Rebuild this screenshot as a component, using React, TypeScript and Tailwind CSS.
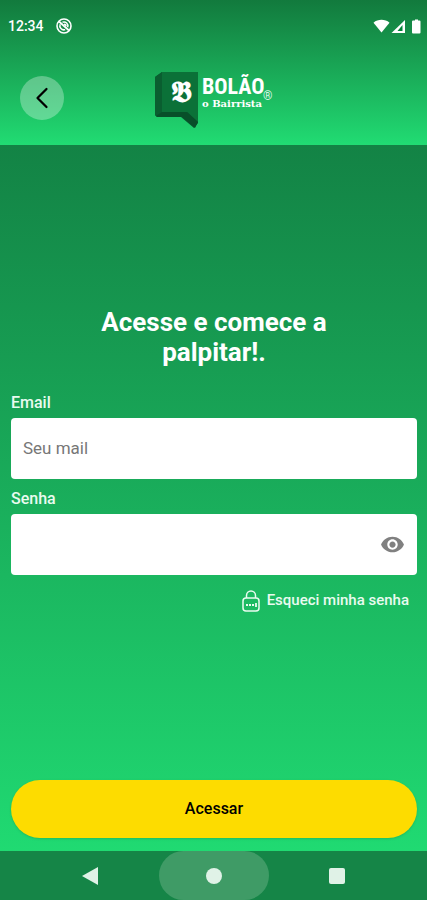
import { useState } from 'react';
import { ChevronLeft } from 'lucide-react';
import { MdVisibility } from 'react-icons/md';

function StatusBar() {
  return (
    <div className="flex h-13 items-center justify-between pr-1.5 pl-2 text-white">
      <div className="flex items-center gap-3">
        <span className="text-sm font-medium">12:34</span>
        <svg viewBox="0 0 16 16" className="size-4" fill="none" stroke="currentColor">
          <circle cx="8" cy="8" r="7" strokeWidth="1.6" />
          <path d="M3 3.5 13 12.5" strokeWidth="1.8" />
          <path d="M6.5 4.2a4 4 0 0 1 5.2 5M4.2 6.2a4 4 0 0 0 5 5.4M8 6.2a2 2 0 0 1 2 2" strokeWidth="1.5" />
        </svg>
      </div>
      <svg viewBox="0 0 48 16" className="h-4 w-12" fill="currentColor">
        <path d="M.5 4.7C5 .9 12 .9 16.500 4.700L8.500 14.500Z" />
        <path d="M32 2v13H18.500Z" />
        <path d="M29.500 7v6h-5Z" className="fill-green-700" />
        <path d="M40 2.500h2V1.500h3v1h1.500q1 0 1 1v11q0 1-1 1H40q-1 0-1-1v-11q0-1 1-1Z" />
      </svg>
    </div>
  );
}

function Logo() {
  return (
    <svg viewBox="0 0 120 60" className="h-15 w-30" role="img" aria-label="Bolão o Bairrista">
      <path d="M1 9 8 4h36v51l-4 5-13-11H3l-2-2Z" fill="#075c30" />
      <path d="M8 4h36v50L33 44H8Z" fill="#0b7138" />
      <path d="M1 9 8 4v40l-6 4-1-1Z" fill="#0a5e30" />
      <path d="m2 48 6-4h25l11 10-3 6-13-11H3Z" fill="#084f29" />
      <text x="27" y="34" textAnchor="middle" fill="#fff" className="font-['DejaVu_Sans','DejaVu_Serif',serif] text-[29px] font-bold">
        𝕭
      </text>
      <text x="48" y="26" fill="#fff" className="font-['Roboto_Condensed','Liberation_Sans_Narrow',sans-serif] text-[22px] font-bold">
        BOLÃO
      </text>
      <text x="48" y="39" fill="#fff" className="font-['DejaVu_Serif',serif] text-[10px] font-bold">
        o Bairrista
      </text>
      <text x="109" y="32" fill="#d7f5e3" className="font-['Roboto',sans-serif] text-[12px]">
        ®
      </text>
    </svg>
  );
}

function LockIcon() {
  return (
    <svg viewBox="0 0 20 24" className="h-6 w-5" fill="none" stroke="currentColor" strokeWidth="1.5">
      <rect x="2" y="9" width="16" height="13" rx="3" />
      <path d="M5.500 9V6.500a4.500 4.500 0 0 1 9 0V9" />
      <path d="M5 16h2m1 0h2m1 0h2m2-2v4" strokeWidth="1.8" />
    </svg>
  );
}

function NavBar() {
  return (
    <nav className="flex h-[49px] items-stretch justify-between bg-[#158547] px-9 text-[#e0f2e7]">
      <button type="button" aria-label="Voltar" className="grid w-27 place-items-center">
        <svg viewBox="0 0 18 18" className="size-[18px]" fill="currentColor">
          <path d="M1 9 17 0v18Z" />
        </svg>
      </button>
      <button type="button" aria-label="Início" className="grid w-[110px] place-items-center rounded-full bg-[#3f9b66]">
        <span className="size-4 rounded-full bg-[#e0f2e7]" />
      </button>
      <button type="button" aria-label="Recentes" className="grid w-27 place-items-center">
        <span className="size-4 rounded-xs bg-[#e0f2e7]" />
      </button>
    </nav>
  );
}

const labelClass = 'text-base leading-5 font-medium text-[#e9fbf0]';
const inputClass =
  'block h-[61px] w-full rounded bg-white px-3 text-[17px] text-gray-800 outline-none placeholder:text-[#777777]';

export default function App() {
  const [showPassword, setShowPassword] = useState(false);

  return (
    <div className="flex min-h-screen flex-col font-['Roboto',sans-serif]">
      <header className="bg-linear-to-b from-[#127a3d] to-[#21dc73] pb-[17px]">
        <StatusBar />
        <div className="grid grid-cols-[1fr_auto_1fr] items-center px-5 pt-4">
          <button
            type="button"
            aria-label="Voltar"
            className="grid size-11 place-items-center rounded-full bg-white/30 text-black"
          >
            <ChevronLeft size={36} strokeWidth={1.5} />
          </button>
          <Logo />
        </div>
      </header>

      <main className="flex grow flex-col bg-linear-to-b from-[#138345] to-[#20da72] pr-2.5 pb-[13px] pl-[11px]">
        <form className="flex grow flex-col" onSubmit={(e) => e.preventDefault()}>
          <div className="flex grow flex-col justify-center pb-1.5">
            <h1 className="mx-auto max-w-64 text-center text-[26px] leading-[30px] font-bold text-white">
              Acesse e comece a palpitar!.
            </h1>

            <label htmlFor="email" className={`mt-[26px] ${labelClass}`}>
              Email
            </label>
            <div className="mt-[5px]">
              <input id="email" type="email" placeholder="Seu mail" className={inputClass} />
            </div>

            <label htmlFor="senha" className={`mt-2.5 ${labelClass}`}>
              Senha
            </label>
            <div className="relative mt-[5px]">
              <input id="senha" type={showPassword ? 'text' : 'password'} className={inputClass} />
              <button
                type="button"
                aria-label="Mostrar senha"
                onClick={() => setShowPassword(!showPassword)}
                className="absolute inset-y-0 right-3 text-[#808080]"
              >
                <MdVisibility size={25} />
              </button>
            </div>

            <a href="#senha" className="mt-3.5 mr-2 flex items-center gap-1.5 self-end text-[15px] font-medium text-[#e9fbf0]">
              <LockIcon />
              Esqueci minha senha
            </a>
          </div>

          <button
            type="submit"
            className="h-[58px] w-full rounded-full bg-[#fddc00] text-base font-medium text-black shadow-sm"
          >
            Acessar
          </button>
        </form>
      </main>

      <NavBar />
    </div>
  );
}
